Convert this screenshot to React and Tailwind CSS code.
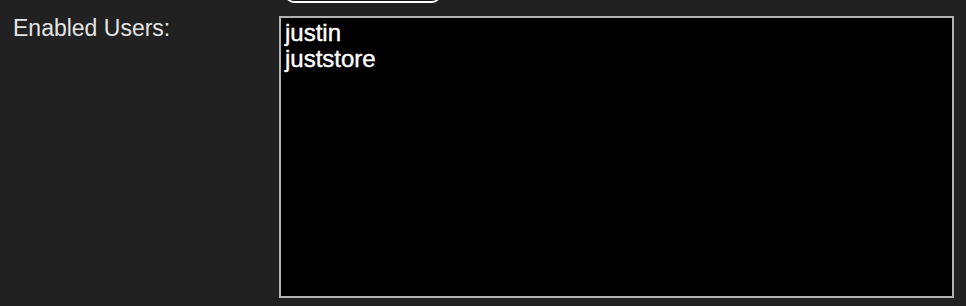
import { useState } from 'react';

const users = ['justin', 'juststore'];

function App() {
    const [selected, setSelected] = useState(null);

    return (
        <div className="w-[966px] h-[306px] overflow-hidden bg-[#212121] font-['Liberation_Sans',Arial,sans-serif]">
            <div className="flex pl-[13px] pr-[12px]">
                <div className="w-[266px] shrink-0" />
                <div className="flex-1">
                    <button className="ml-[6px] mt-[-31px] block w-[156px] h-[34px] rounded-[9px] border-2 border-white bg-[#141414]" />
                </div>
            </div>
            <div className="flex items-start pl-[13px] pr-[12px] mt-[13px]">
                <label className="w-[266px] shrink-0 text-[23px] leading-[25px] text-[#e4e4e4]">
                    Enabled Users:
                </label>
                <div className="flex-1 h-[282px] border-2 border-[#b3b3b3] bg-black px-[4px] pt-[2px] overflow-auto">
                    {users.map((u) => (
                        <div
                            key={u}
                            onClick={() => setSelected(u)}
                            className={
                                'text-[24px] leading-[26px] text-white cursor-default [-webkit-text-stroke:0.4px_white] ' +
                                (selected === u ? 'bg-[#3a6fd8]' : '')
                            }
                        >
                            {u}
                        </div>
                    ))}
                </div>
            </div>
        </div>
    );
}

export default App;
